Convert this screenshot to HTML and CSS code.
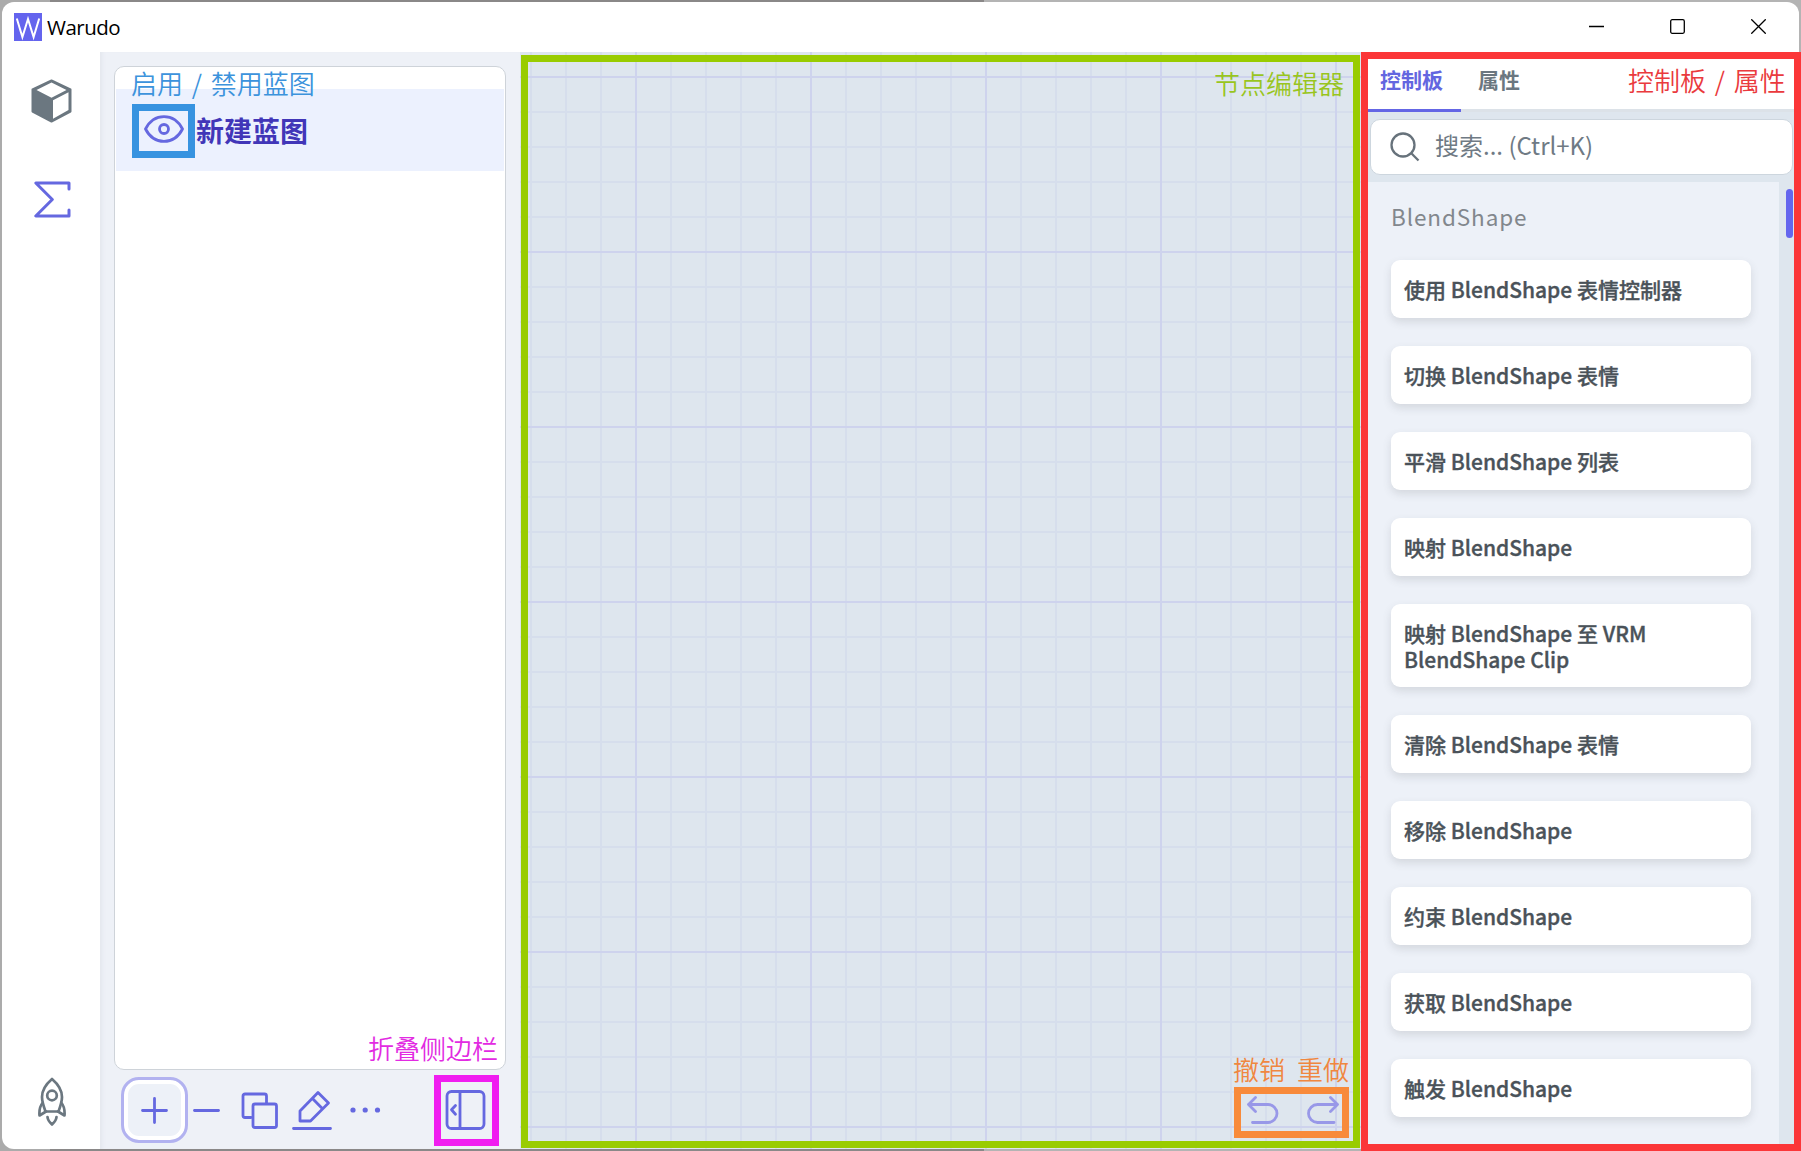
FILE: index.html
```html
<!DOCTYPE html>
<html lang="zh-CN">
<head>
<meta charset="utf-8">
<title>Warudo</title>
<link rel="stylesheet" href="styles.css">
</head>
<body>
<div class="window">
  <header class="titlebar">
    <svg class="logo" width="28" height="28" viewBox="0 0 28 28"><rect width="28" height="28" fill="#6464ee"/><path d="M2.800 5.500 8.400 24 14 6l5.600 18L25.200 5.500" fill="none" stroke="#fff" stroke-width="2"/></svg>
    <span class="app-name">Warudo</span>
    <div class="window-buttons">
      <svg width="15" height="15" viewBox="0 0 15 15"><path d="M0 7.500h15"/></svg>
      <svg width="15" height="15" viewBox="0 0 15 15"><rect x=".7" y=".7" width="13.600" height="13.600" rx="1.500"/></svg>
      <svg width="15" height="15" viewBox="0 0 15 15"><path d="M.3.3l14.400 14.400M14.700.3.3 14.700"/></svg>
    </div>
  </header>
  <div class="workspace">
    <nav class="rail">
      <svg class="cube" width="41" height="44" viewBox="0 0 41 44"><path d="M20.500 1.500 39.500 10.500V32.500L20.500 42.500 1.500 32.500V10.500z" fill="#6b7780" stroke="#6b7780" stroke-width="2" stroke-linejoin="round"/><path d="M20.500 3.500 35.500 11 20.500 18.800 5.500 11zM22 21.200 37.500 13.200V31L22 39.800z" fill="#fff"/></svg>
      <svg class="sigma" width="37" height="37" viewBox="0 0 37 37"><path d="M35 8V2H1.800L18.300 18.500 1.800 35H35V29" fill="none" stroke="#6568e0" stroke-width="3" stroke-linecap="round" stroke-linejoin="round"/></svg>
      <svg class="rocket" width="28" height="49" viewBox="0 0 28 49"><g fill="none" stroke="#6b7780" stroke-width="2.700" stroke-linejoin="round" stroke-linecap="round"><path d="M14 2C7 8 4 14 4 20c0 5 1.500 9 3.500 14.500h13C22.500 29 24 25 24 20 24 14 21 8 14 2z"/><circle cx="14" cy="18.500" r="4.800"/><path d="M4.500 26C2 29 1 32 1.500 38.500L8 34.500M23.500 26c2.500 3 3.500 6 3 12.500L20 34.500M9.500 40c.2 3.500 1.800 5 4.500 7.500 2.700-2.500 4.300-4 4.500-7.500"/></g></svg>
    </nav>
    <section class="blueprints">
      <div class="blueprint-list">
        <div class="blueprint">
          <svg width="40" height="28" viewBox="0 0 40 28"><g fill="none" stroke="#6568e0" stroke-width="2.800"><path d="M1.500 14C10-2.500 30-2.500 38.500 14 30 30.500 10 30.500 1.500 14z" stroke-linejoin="round"/><circle cx="20" cy="14" r="4.500"/></g></svg>
          <span>新建蓝图</span>
        </div>
      </div>
      <div class="toolbar">
        <button class="add"><svg width="27" height="27" viewBox="0 0 27 27"><path d="M13.500 1.500v24M1.500 13.500h24"/></svg></button>
        <svg class="minus" width="27" height="27" viewBox="0 0 27 27"><path d="M1.500 13.500h24"/></svg>
        <svg class="copy" width="37" height="37" viewBox="0 0 37 37"><path d="M10 25.500H4a2 2 0 0 1-2-2V4a2 2 0 0 1 2-2h19.500a2 2 0 0 1 2 2v7"/><rect x="12" y="12" width="23.500" height="23.500" rx="2"/></svg>
        <svg class="edit" width="40" height="40" viewBox="0 0 40 40"><path d="M1.500 38.500h37M8 31V21L26 2.500 36.500 13 18.500 31zM20.500 8.500 30.500 18.800"/></svg>
        <svg class="dots" width="31" height="6" viewBox="0 0 31 6"><circle cx="3" cy="3" r="2.600"/><circle cx="15.200" cy="3" r="2.600"/><circle cx="27.500" cy="3" r="2.600"/></svg>
        <svg class="collapse" width="41" height="40" viewBox="0 0 41 40"><rect x="2" y="1.500" width="37" height="37" rx="4.500"/><path d="M15 1.500v37M10.500 15.500 6.500 19.800 10.500 24.200"/></svg>
      </div>
    </section>
    <main class="editor">
      <div class="history">
        <svg width="32" height="28" viewBox="0 0 32 28"><path d="M8.500 1.500 1.500 8.500 8.500 15.500M1.500 8.500H21a9 9 0 0 1 0 18H5.500"/></svg>
        <svg width="32" height="28" viewBox="0 0 32 28"><path d="M23.500 1.500 30.500 8.500 23.500 15.500M30.500 8.500H10.500a9 9 0 0 0 0 18H27"/></svg>
      </div>
    </main>
    <aside class="palette">
      <div class="tabs"><div class="tab active">控制板</div><div class="tab">属性</div></div>
      <div class="search-area">
        <div class="search">
          <svg width="30" height="30" viewBox="0 0 30 30"><g fill="none" stroke="#67727b" stroke-width="2.300"><circle cx="13" cy="13" r="11.500"/><path d="M21.300 21.300 28.500 28.500"/></g></svg>
          <span>搜索... (Ctrl+K)</span>
        </div>
      </div>
      <div class="palette-body">
        <div class="nodes">
          <h2>BlendShape</h2>
          <div class="node">使用 BlendShape 表情控制器</div>
          <div class="node">切换 BlendShape 表情</div>
          <div class="node">平滑 BlendShape 列表</div>
          <div class="node">映射 BlendShape</div>
          <div class="node">映射 BlendShape 至 VRM<br>BlendShape Clip</div>
          <div class="node">清除 BlendShape 表情</div>
          <div class="node">移除 BlendShape</div>
          <div class="node">约束 BlendShape</div>
          <div class="node">获取 BlendShape</div>
          <div class="node">触发 BlendShape</div>
        </div>
        <div class="scroll"><div class="thumb"></div></div>
      </div>
    </aside>
  </div>
</div>
<div class="frame frame-eye"></div>
<div class="frame frame-collapse"></div>
<div class="frame frame-editor"></div>
<div class="frame frame-history"></div>
<div class="frame frame-palette"></div>
<div class="note note-eye">启用 / 禁用蓝图</div>
<div class="note note-collapse">折叠侧边栏</div>
<div class="note note-editor">节点编辑器</div>
<div class="note note-undo">撤销</div>
<div class="note note-redo">重做</div>
<div class="note note-palette">控制板 / 属性</div>
</body>
</html>
```
FILE: styles.css
```css
* { box-sizing: border-box; }
body {
  margin: 0;
  width: 1801px;
  height: 1151px;
  padding: 2px;
  position: relative;
  overflow: hidden;
  background: linear-gradient(90deg, #ababab 0 50px, #8a8888 50px 984px, #b4b4b4 984px);
  font-family: "Noto Sans CJK SC", sans-serif;
}
svg { display: block; flex: none; }
.window {
  height: 1147px;
  display: flex;
  flex-direction: column;
  border-radius: 12px;
  overflow: hidden;
  background: #fff;
}
.titlebar {
  height: 50px;
  flex: none;
  display: flex;
  align-items: center;
  padding: 0 33px 0 12px;
}
.logo { margin-top: -1px; }
.app-name {
  margin-left: 5px;
  font: 20.5px/28px "Open Sans", sans-serif;
  letter-spacing: -0.5px;
  color: #000;
}
.window-buttons { margin-left: auto; display: flex; gap: 66px; margin-top: -1px; }
.window-buttons svg { fill: none; stroke: #000; stroke-width: 1.3; }
.workspace { flex: 1; min-height: 0; display: flex; }
.rail {
  width: 98px;
  flex: none;
  display: flex;
  flex-direction: column;
  align-items: center;
  padding: 27px 0 23px;
}
.cube { margin-left: 1px; }
.sigma { margin: 58px 0 0 2px; }
.rocket { margin: auto 0 0 2px; }
.blueprints {
  width: 420px;
  flex: none;
  display: flex;
  flex-direction: column;
  padding: 14px 14px 0;
  background: #eef1f7;
  box-shadow: inset 5px 0 4px -3px #e3e6ed;
}
.blueprint-list {
  height: 1004px;
  flex: none;
  border: 1px solid #ced3d9;
  border-radius: 10px;
  background: #fff;
  padding: 22px 1px 0;
}
.blueprint {
  height: 82px;
  display: flex;
  align-items: center;
  gap: 12px;
  padding-left: 28px;
  background: #ecf1fe;
  font-size: 28px;
  font-weight: 700;
  color: #4136b8;
}
.blueprint svg { margin-top: -2px; }
.toolbar { display: flex; flex: none; align-items: center; height: 80px; padding-left: 7px; }
.toolbar svg { fill: none; stroke: #6568e0; stroke-width: 2.8; stroke-linecap: round; stroke-linejoin: round; }
.add {
  width: 67px;
  height: 66px;
  padding: 0;
  border: 3px solid #b2b2f0;
  border-radius: 18px;
  background: #edf1f8;
  box-shadow: inset 0 0 0 4px #fff;
  display: flex;
  align-items: center;
  justify-content: center;
}
.minus { margin-left: 5px; }
.copy { margin-left: 21px; }
.edit { margin-left: 14px; }
.toolbar .dots { margin-left: 18px; fill: #6568e0; stroke: none; }
.collapse { margin-left: 64px; }
.editor {
  width: 841px;
  flex: none;
  display: flex;
  justify-content: flex-end;
  align-items: flex-end;
  padding: 0 22px 25px;
  background-color: #dee6ee;
  background-image:
    linear-gradient(90deg, #ced3ed 2px, transparent 2px),
    linear-gradient(#ced3ed 2px, transparent 2px),
    linear-gradient(90deg, #d6deec 2px, transparent 2px),
    linear-gradient(#d6deec 2px, transparent 2px);
  background-size: 175px 175px, 175px 175px, 35px 35px, 35px 35px;
  background-position: 115px 0, 0 24px, 10px 0, 0 24px;
}
.history { display: flex; gap: 28px; }
.history svg { fill: none; stroke: #9898e8; stroke-width: 2.8; stroke-linecap: round; stroke-linejoin: round; }
.palette { flex: 1; display: flex; flex-direction: column; background: #dee6ee; padding-left: 7px; }
.tabs { height: 60px; flex: none; display: flex; background: linear-gradient(#fff 57px, #dce2e8 57px); }
.tab { height: 60px; padding: 11px 17px 0 17px; font-size: 21px; line-height: 32px; font-weight: 700; color: #6b7780; }
.tab.active { width: 93px; padding: 11px 0 0 12px; color: #6366e0; border-bottom: 3px solid #6466e5; }
.search-area { height: 70px; flex: none; padding: 7px 6px 0 2px; }
.search {
  height: 56px;
  display: flex;
  align-items: center;
  gap: 15px;
  padding-left: 19px;
  border: 1px solid #cdd6de;
  border-radius: 10px;
  background: #fff;
  font-size: 24px;
  color: #6f7a84;
}
.search span { line-height: 36px; padding-bottom: 5px; }
.palette-body { flex: 1; min-height: 0; display: flex; }
.nodes {
  width: 411px;
  padding: 17px 28px 0 23px;
  display: flex;
  flex-direction: column;
  gap: 28px;
  overflow: hidden;
  background: #edf1f8;
}
.nodes h2 { margin: 0 0 -3px; height: 36px; font-size: 22.5px; line-height: 35px; font-weight: 400; letter-spacing: .9px; color: #82878d; }
.node {
  flex: none;
  min-height: 58px;
  padding: 16px 13px 15px;
  border-radius: 9px;
  background: #fff;
  box-shadow: 0 4px 8px rgba(80, 85, 95, .16);
  font-size: 21px;
  line-height: 26px;
  font-weight: 500;
  -webkit-text-stroke: .35px #4a5259;
  color: #4a5259;
}
.scroll { flex: 1; padding: 7px 0 0 7px; }
.thumb { width: 7px; height: 49px; border-radius: 4px; background: #6466ee; }

/* annotations laid over the window */
.frame { position: absolute; border: 7px solid; }
.frame-eye { left: 132px; top: 104px; width: 63px; height: 54px; border-color: #3793e0; }
.frame-collapse { left: 434px; top: 1075px; width: 65px; height: 71px; border-color: #f01df0; }
.frame-editor { left: 521px; top: 55px; width: 839px; height: 1093px; border-color: #99cc00; }
.frame-history { left: 1234px; top: 1087px; width: 115px; height: 51px; border-color: #f88a3a; }
.frame-palette { left: 1361px; top: 52px; width: 440px; height: 1099px; border-color: #fb3638; }
.note { position: absolute; font-size: 26px; line-height: 38px; font-weight: 350; word-spacing: 3px; white-space: pre; }
.note-eye { left: 131px; top: 64px; color: #3c93dc; }
.note-collapse { left: 368px; top: 1029px; color: #e22be2; }
.note-editor { left: 1214px; top: 64px; color: #99c51e; }
.note-undo { left: 1233px; top: 1050px; color: #f0873f; }
.note-redo { left: 1297px; top: 1050px; color: #f0873f; }
.note-palette { left: 1628px; top: 61px; color: #ea3a3d; }
```
